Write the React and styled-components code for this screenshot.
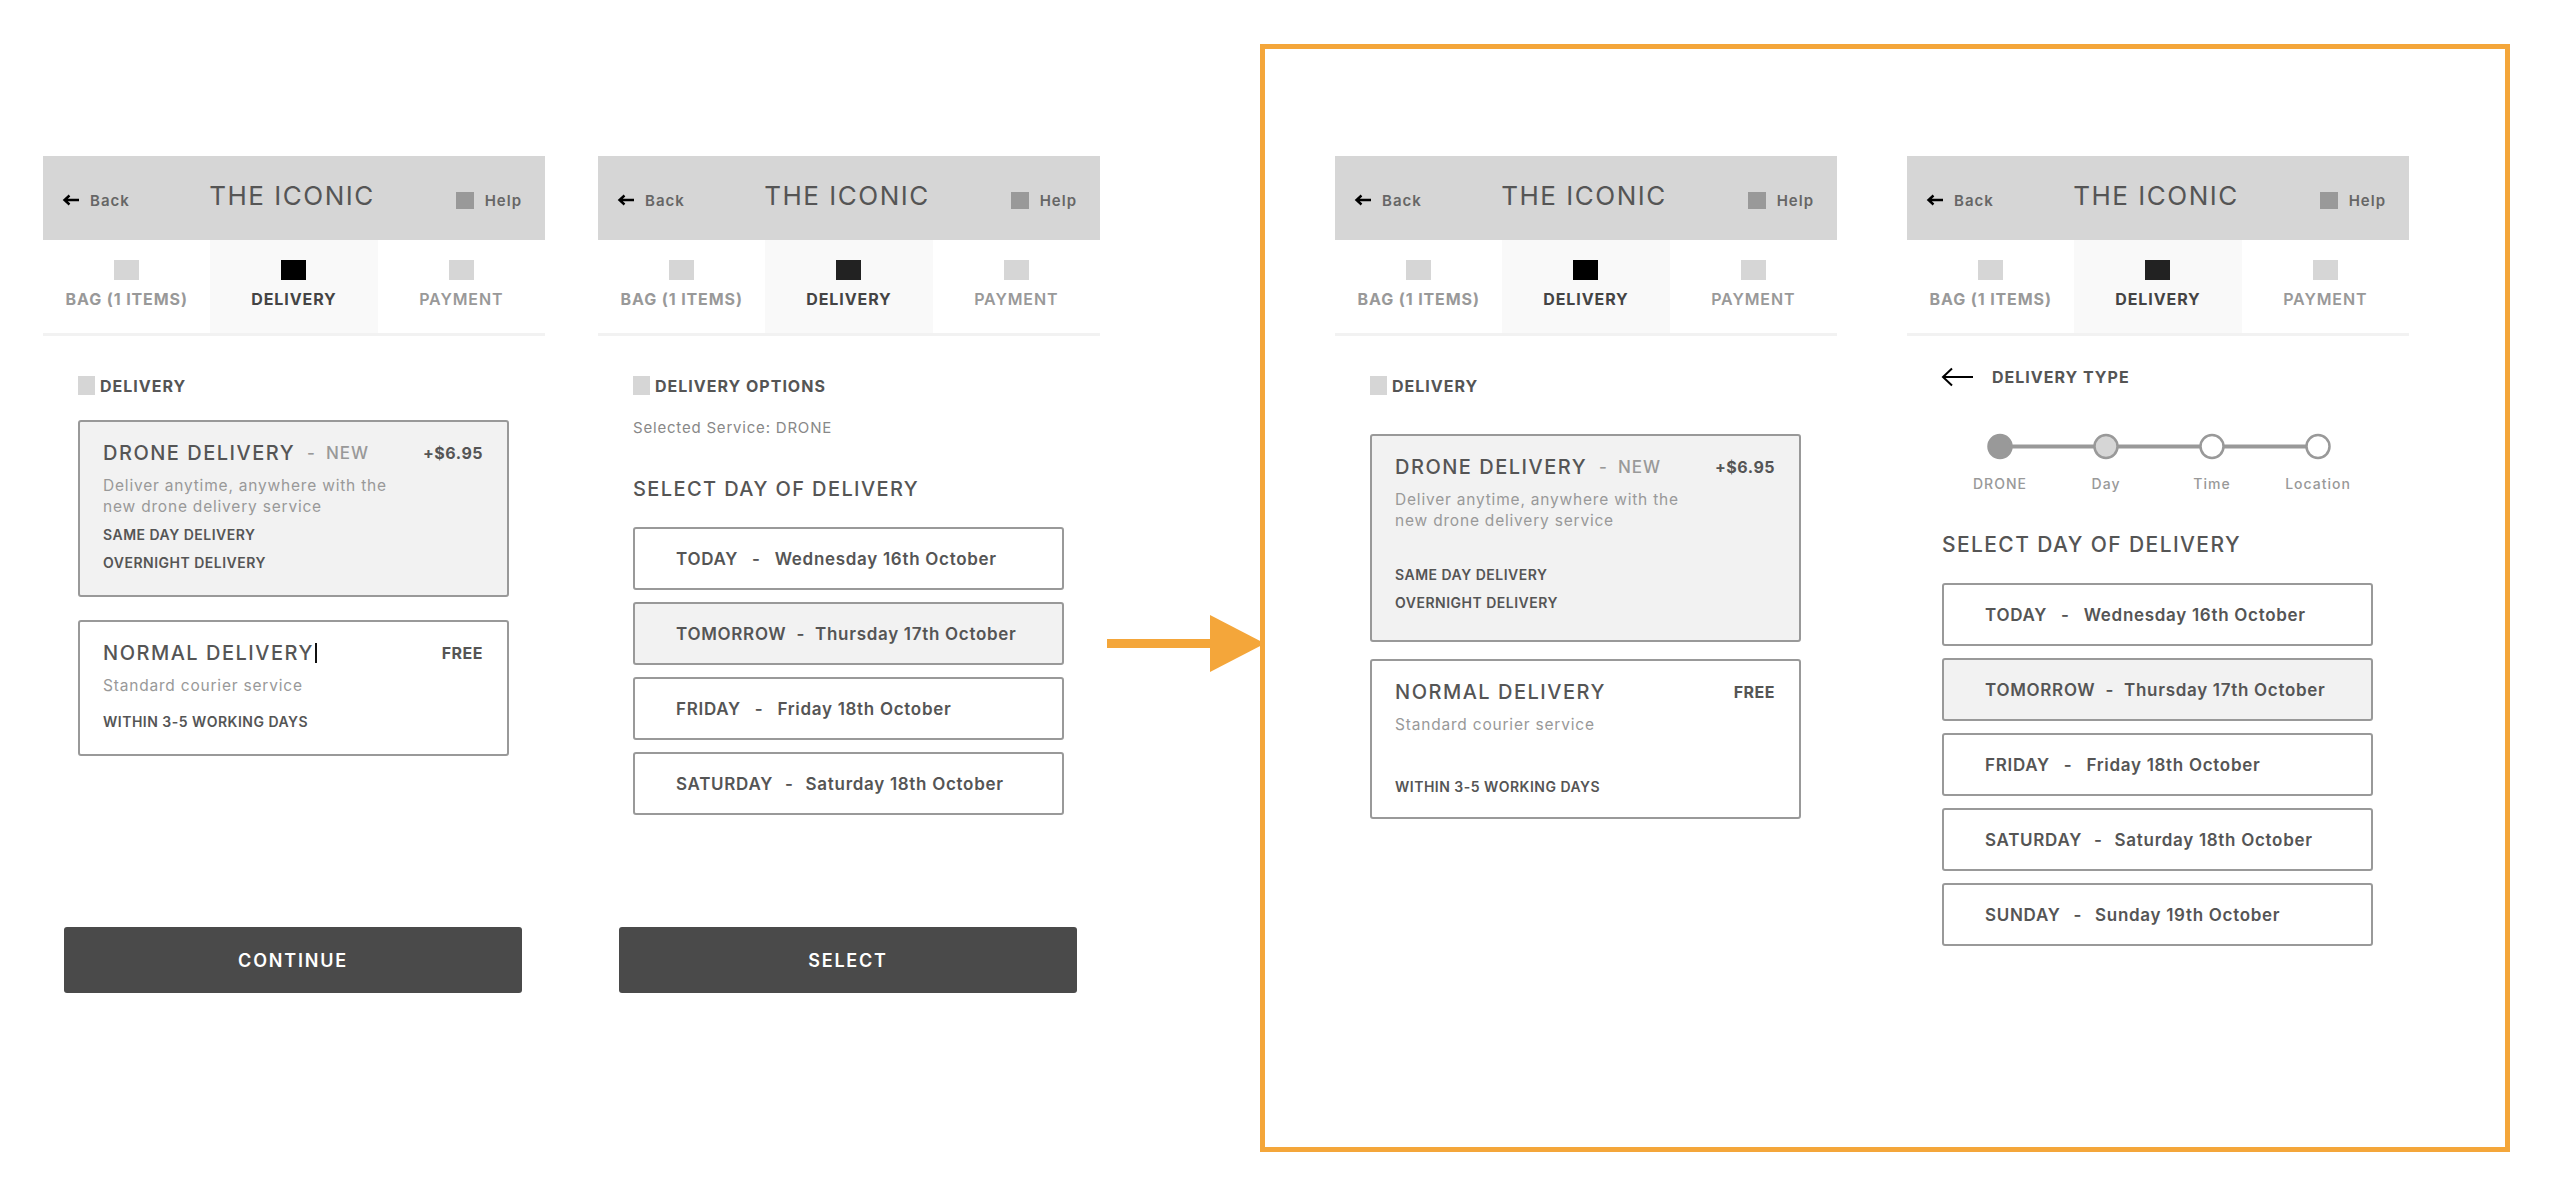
import React from "react";
import styled, { createGlobalStyle } from "styled-components";

const FONT = `Inter, "Open Sans", "Liberation Sans", sans-serif`;

const GlobalStyle = createGlobalStyle`
  *, *::before, *::after { box-sizing: border-box; }
  html, body { margin: 0; padding: 0; background: #fff; }
  body { font-family: ${FONT}; color: #555; }
`;

const TABS = [
  { label: "BAG (1 ITEMS)", weight: 700 },
  { label: "DELIVERY", weight: 700, active: true },
  { label: "PAYMENT", weight: 600 },
];

const DAYS = [
  { day: "TODAY", date: "Wednesday 16th October", gap: 14 },
  { day: "TOMORROW", date: "Thursday 17th October", gap: 10, selected: true },
  { day: "FRIDAY", date: "Friday 18th October", gap: 14 },
  { day: "SATURDAY", date: "Saturday 18th October", gap: 12 },
];

const STEPS = [
  { label: "DRONE", fill: "#999" },
  { label: "Day", fill: "#d6d6d6" },
  { label: "Time", fill: "#fff" },
  { label: "Location", fill: "#fff" },
];

const Page = styled.main`
  display: flex;
  align-items: flex-start;
  width: 2560px;
  height: 1204px;
  padding: 44px 0 0 43px;
  overflow: hidden;
`;

const Flow = styled.section`
  display: flex;
  gap: 53px;
  margin-top: 112px;
`;

const Pointer = styled.svg`
  flex: none;
  display: block;
  margin: 571px -5px 0 7px;
  position: relative;
  z-index: 1;
`;

const Highlight = styled.section`
  flex: none;
  display: flex;
  gap: 70px;
  width: 1250px;
  height: 1108px;
  padding: 107px 0 0 70px;
  border: 5px solid #f4a63a;
`;

const Panel = styled.div`
  flex: none;
  display: flex;
  flex-direction: column;
  width: 502px;
  height: 837px;
`;

const Header = styled.header`
  flex: none;
  display: grid;
  grid-template-columns: 1fr auto 1fr;
  align-items: center;
  height: 84px;
  padding: 0 23px 0 19px;
  background: #d6d6d6;
`;

const NavLink = styled.a`
  justify-self: ${(p) => (p.$end ? "end" : "start")};
  display: flex;
  align-items: center;
  gap: ${(p) => p.$gap}px;
  padding-top: 4px;
  font-size: 15px;
  font-weight: 600;
  letter-spacing: 1px;
  color: #666;
  text-decoration: none;
`;

const HelpIcon = styled.span`
  display: block;
  width: 18px;
  height: 17px;
  background: #999;
`;

const Brand = styled.h1`
  margin: 0;
  padding-bottom: 4px;
  font-size: 26px;
  line-height: 30px;
  font-weight: 400;
  letter-spacing: 1.5px;
  color: #555;
`;

const Tabs = styled.nav`
  flex: none;
  display: grid;
  grid-template-columns: repeat(3, 1fr);
  height: 96px;
  border-bottom: 3px solid #f2f2f2;
`;

const Tab = styled.div`
  display: flex;
  flex-direction: column;
  align-items: center;
  padding-top: 20px;
  background: ${(p) => (p.$active ? "#f9f9f9" : "transparent")};
`;

const TabIcon = styled.span`
  width: 25px;
  height: 20px;
  background: ${(p) => p.$color};
`;

const TabLabel = styled.span`
  margin-top: 10px;
  font-size: 16px;
  line-height: 18px;
  font-weight: ${(p) => p.$weight};
  letter-spacing: 0.9px;
  color: ${(p) => (p.$active ? "#444" : "#999")};
  white-space: nowrap;
`;

const Body = styled.div`
  flex: 1;
  display: flex;
  flex-direction: column;
  padding: ${(p) => p.$top}px 36px 0 35px;
`;

const SectionTitle = styled.h2`
  display: flex;
  align-items: center;
  gap: 5px;
  height: 19px;
  margin: 0;
  font-size: 16px;
  font-weight: 700;
  letter-spacing: 1px;
  color: #555;

  &::before {
    content: "";
    width: 17px;
    height: 19px;
    background: #d6d6d6;
  }
`;

const CardList = styled.div`
  display: flex;
  flex-direction: column;
  gap: ${(p) => p.$gap}px;
  margin-top: ${(p) => p.$top}px;
`;

const Card = styled.article`
  padding: 19px 24px ${(p) => p.$pb}px 23px;
  border: 2px solid #999;
  border-radius: 3px;
  background: ${(p) => (p.$selected ? "#f2f2f2" : "#fff")};
`;

const CardHead = styled.div`
  display: flex;
  justify-content: space-between;
  align-items: center;
`;

const CardTitle = styled.h3`
  display: flex;
  align-items: center;
  margin: 0;
  font-size: 20px;
  line-height: 24px;
  font-weight: 500;
  letter-spacing: 1.5px;
  color: #555;
`;

const Tag = styled.span`
  display: inline-flex;
  gap: 10px;
  margin-left: 12px;
  font-size: 17px;
  letter-spacing: 1px;
  color: #999;
`;

const Caret = styled.span`
  width: 2px;
  height: 20px;
  margin-left: 1px;
  background: #111;
`;

const Price = styled.span`
  font-size: 16px;
  font-weight: 700;
  letter-spacing: 0.5px;
  color: #555;
`;

const CardText = styled.p`
  margin: 10px 0 0;
  font-size: 15.5px;
  line-height: 21px;
  letter-spacing: 0.8px;
  color: #999;
`;

const OptionList = styled.ul`
  margin: ${(p) => p.$gap}px 0 0;
  padding: 0;
  list-style: none;
`;

const Option = styled.li`
  font-size: 14px;
  line-height: 28px;
  font-weight: 600;
  letter-spacing: 0.5px;
  color: #555;
`;

const Note = styled.p`
  margin: 24px 0 0;
  font-size: 15px;
  line-height: 17px;
  letter-spacing: 0.8px;
  color: #888;
`;

const Heading = styled.h3`
  margin: ${(p) => p.$top}px 0 0;
  font-size: ${(p) => p.$size}px;
  line-height: 24px;
  font-weight: 500;
  letter-spacing: 1.4px;
  color: #555;
`;

const DayList = styled.div`
  display: flex;
  flex-direction: column;
  gap: 12px;
  margin-top: 26px;
`;

const DayOption = styled.div`
  display: flex;
  align-items: center;
  height: 63px;
  padding-left: 41px;
  border: 2px solid #999;
  border-radius: 3px;
  background: ${(p) => (p.$selected ? "#f2f2f2" : "#fff")};
  font-size: 17px;
  font-weight: 600;
  letter-spacing: 0.7px;
  color: #555;
  white-space: nowrap;
`;

const DaySep = styled.span`
  margin: 0 ${(p) => p.$gap}px;
`;

const PrimaryButton = styled.button`
  flex: none;
  height: 66px;
  margin: 0 23px 0 21px;
  border: none;
  border-radius: 3px;
  background: #4a4a4a;
  font-family: ${FONT};
  font-size: 18px;
  font-weight: 600;
  letter-spacing: 1.8px;
  color: #fff;
`;

const BackRow = styled.div`
  display: flex;
  align-items: center;
  gap: 19px;
  height: 20px;
  margin-left: -1px;
  font-size: 16px;
  font-weight: 700;
  letter-spacing: 1px;
  color: #555;
`;

const Stepper = styled.div`
  margin: 46px 0 0 5px;
`;

const StepLabels = styled.div`
  display: grid;
  grid-template-columns: repeat(4, 106px);
  margin-top: 16px;
`;

const StepLabel = styled.span`
  text-align: center;
  font-size: 14px;
  line-height: 16px;
  font-weight: 500;
  letter-spacing: 1px;
  color: #999;
`;

const SmallArrow = () => (
  <svg width="18" height="12" viewBox="0 0 18 12">
    <path d="M17 6H2.5M7.5 1.5L2.5 6l5 4.5" fill="none" stroke="#000" strokeWidth="2.4" />
  </svg>
);

const LongArrow = () => (
  <svg width="32" height="20" viewBox="0 0 32 20">
    <path d="M32 10H2M11 1.5L2 10l9 8.5" fill="none" stroke="#000" strokeWidth="2" />
  </svg>
);

function Shell({ iconColor, top = 40, action, children }) {
  return (
    <Panel>
      <Header>
        <NavLink $gap={10}>
          <SmallArrow />
          Back
        </NavLink>
        <Brand>THE ICONIC</Brand>
        <NavLink $end $gap={11}>
          <HelpIcon />
          Help
        </NavLink>
      </Header>
      <Tabs>
        {TABS.map((t) => (
          <Tab key={t.label} $active={t.active}>
            <TabIcon $color={t.active ? iconColor : "#d6d6d6"} />
            <TabLabel $active={t.active} $weight={t.weight}>
              {t.label}
            </TabLabel>
          </Tab>
        ))}
      </Tabs>
      <Body $top={top}>{children}</Body>
      {action && <PrimaryButton>{action}</PrimaryButton>}
    </Panel>
  );
}

function DeliveryCards({ spread }) {
  return (
    <CardList $top={spread ? 39 : 25} $gap={spread ? 17 : 23}>
      <Card $selected $pb={spread ? 23 : 18}>
        <CardHead>
          <CardTitle>
            DRONE DELIVERY
            <Tag>
              <span>-</span>
              <span>NEW</span>
            </Tag>
          </CardTitle>
          <Price>+$6.95</Price>
        </CardHead>
        <CardText>
          Deliver anytime, anywhere with the
          <br />
          new drone delivery service
        </CardText>
        <OptionList $gap={spread ? 30 : 4}>
          <Option>SAME DAY DELIVERY</Option>
          <Option>OVERNIGHT DELIVERY</Option>
        </OptionList>
      </Card>
      <Card $pb={spread ? 16 : 18}>
        <CardHead>
          <CardTitle>
            NORMAL DELIVERY
            {!spread && <Caret />}
          </CardTitle>
          <Price>FREE</Price>
        </CardHead>
        <CardText>Standard courier service</CardText>
        <OptionList $gap={spread ? 38 : 12}>
          <Option>WITHIN 3-5 WORKING DAYS</Option>
        </OptionList>
      </Card>
    </CardList>
  );
}

function Days({ items }) {
  return (
    <DayList>
      {items.map((d) => (
        <DayOption key={d.day} $selected={d.selected}>
          {d.day}
          <DaySep $gap={d.gap}>-</DaySep>
          {d.date}
        </DayOption>
      ))}
    </DayList>
  );
}

function StepTrack() {
  const xs = [53, 159, 265, 371];
  return (
    <Stepper>
      <svg width="424" height="27" viewBox="0 0 424 27" style={{ display: "block" }}>
        <line x1="53" y1="13.5" x2="371" y2="13.5" stroke="#999" strokeWidth="4" />
        {STEPS.map((s, i) => (
          <circle key={s.label} cx={xs[i]} cy="13.5" r="11.5" fill={s.fill} stroke="#999" strokeWidth="2.5" />
        ))}
      </svg>
      <StepLabels>
        {STEPS.map((s) => (
          <StepLabel key={s.label}>{s.label}</StepLabel>
        ))}
      </StepLabels>
    </Stepper>
  );
}

export default function App() {
  return (
    <>
      <GlobalStyle />
      <Page>
        <Flow>
          <Shell iconColor="#000" action="CONTINUE">
            <SectionTitle>DELIVERY</SectionTitle>
            <DeliveryCards />
          </Shell>
          <Shell iconColor="#222" action="SELECT">
            <SectionTitle>DELIVERY OPTIONS</SectionTitle>
            <Note>Selected Service: DRONE</Note>
            <Heading $top={41} $size={20}>
              SELECT DAY OF DELIVERY
            </Heading>
            <Days items={DAYS} />
          </Shell>
        </Flow>
        <Pointer width="158" height="57" viewBox="0 0 158 57">
          <rect x="0" y="24" width="104" height="9" fill="#f4a63a" />
          <polygon points="103,0 158,28.5 103,57" fill="#f4a63a" />
        </Pointer>
        <Highlight>
          <Shell iconColor="#000">
            <SectionTitle>DELIVERY</SectionTitle>
            <DeliveryCards spread />
          </Shell>
          <Shell iconColor="#222" top={31}>
            <BackRow>
              <LongArrow />
              DELIVERY TYPE
            </BackRow>
            <StepTrack />
            <Heading $top={41} $size={21}>
              SELECT DAY OF DELIVERY
            </Heading>
            <Days
              items={[
                ...DAYS,
                { day: "SUNDAY", date: "Sunday 19th October", gap: 13 },
              ]}
            />
          </Shell>
        </Highlight>
      </Page>
    </>
  );
}
